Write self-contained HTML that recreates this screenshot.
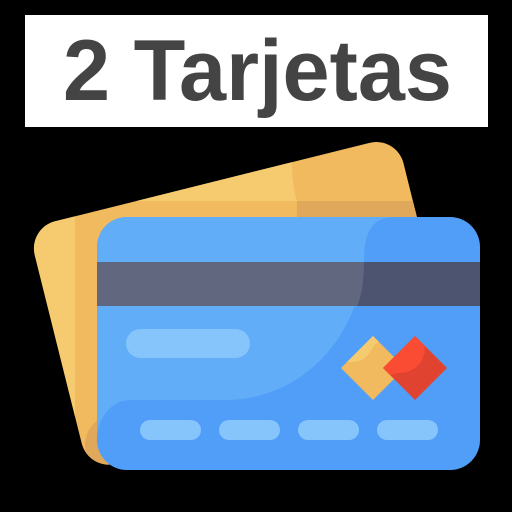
<!DOCTYPE html>
<html><head><meta charset="utf-8"><style>
html,body{margin:0;padding:0;background:#000;width:512px;height:512px;overflow:hidden}
</style></head><body>
<svg width="512" height="512" viewBox="0 0 512 512" xmlns="http://www.w3.org/2000/svg">
<rect x="0" y="0" width="512" height="512" fill="#000"/>
<rect x="25" y="15" width="463" height="112" fill="#fff"/>
<text x="63" y="100" font-family="Liberation Sans, sans-serif" font-weight="bold" font-size="86" fill="#444" textLength="389" lengthAdjust="spacingAndGlyphs">2 Tarjetas</text>
<defs>
<clipPath id="yc"><rect x="0" y="0" width="380" height="250" rx="28" transform="translate(28,228) rotate(-14)"/></clipPath>
<clipPath id="bc"><rect x="97" y="217" width="383" height="253" rx="30"/></clipPath>
</defs>
<g clip-path="url(#yc)">
<rect x="0" y="100" width="512" height="400" fill="#f2ba5e"/>
<path d="M0 100 H320 C300 110 290 130 292 170 C293 185 295 195 297 201 H75 V480 H0 Z" fill="#f6ca6e"/>
<rect x="297" y="201" width="200" height="16" fill="#e0a85a"/>
<circle cx="115" cy="445" r="30" fill="#e0a85a"/>
</g>
<g clip-path="url(#bc)">
<rect x="97" y="217" width="383" height="253" fill="#519ef9"/>
<path d="M97 217 H395 C370 217 364 235 364 262 C358 340 300 400 225 400 H130 C110 400 97 420 97 440 Z" fill="#61adf8"/>
<rect x="97" y="262" width="383" height="44" fill="#4c5470"/>
<path d="M97 262 H364 C364 280 362 295 357 306 H97 Z" fill="#61677f"/>
</g>
<rect x="126" y="329" width="124" height="29" rx="14.5" fill="#85c5fb"/>
<rect x="140" y="420" width="61" height="20" rx="10" fill="#85c5fb"/>
<rect x="219" y="420" width="61" height="20" rx="10" fill="#85c5fb"/>
<rect x="298" y="420" width="61" height="20" rx="10" fill="#85c5fb"/>
<rect x="377" y="420" width="61" height="20" rx="10" fill="#85c5fb"/>
<polygon points="373,336 405,368 373,400 341,368" fill="#f2ba5e"/>
<path d="M373 336 L379 342 C370 345 372 360 353 362 L347 362 L341 368 Z" fill="#f6ca6e"/>
<polygon points="415,336 447,368 415,400 383,368" fill="#e04430"/>
<path d="M415 336 L425 346 C425 362 415 373 398 373 L390 375 L383 368 Z" fill="#f94c32"/>
</svg>
</body></html>
